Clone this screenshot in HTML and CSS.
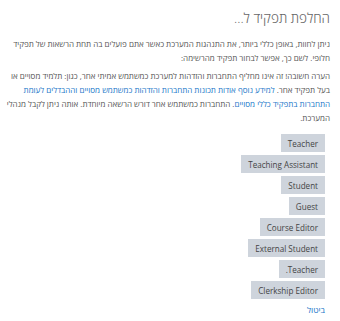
FILE: index.html
```html
<!DOCTYPE html>
<html lang="he" dir="rtl">
<head>
    <meta charset="UTF-8">
    <meta name="viewport" content="width=device-width, initial-scale=1.0">
    <title>החלפת תפקיד</title>
    <link rel="stylesheet" href="styles.css">
</head>
<body>

    <div class="switch-role">
        <h2 class="page-title">החלפת תפקיד ל...</h2>

        <p class="intro">ניתן לחוות, באופן כללי ביותר, את התנהגות המערכת כאשר אתם פועלים בה תחת הרשאות של תפקיד חלופי. לשם כך, אפשר לבחור תפקיד מהרשימה:</p>

        <p class="intro">הערה חשובה! זה אינו מחליף התחברות והזדהות למערכת כמשתמש אמיתי אחר, כגון: תלמיד מסויים או בעל תפקיד אחר. <a href="#">למידע נוסף אודות תכונות התחברות והזדהות כמשתמש מסויים וההבדלים לעומת התחברות בתפקיד כללי מסויים</a>. התחברות כמשתמש אחר דורש הרשאה מיוחדת. אותה ניתן לקבל מנהלי המערכת.</p>

        <div class="role-list">
            <button class="role-btn">Teacher</button>
            <button class="role-btn">Teaching Assistant</button>
            <button class="role-btn">Student</button>
            <button class="role-btn">Guest</button>
            <button class="role-btn">Course Editor</button>
            <button class="role-btn">External Student</button>
            <button class="role-btn">Teacher.</button>
            <button class="role-btn">Clerkship Editor</button>
        </div>

        <a class="cancel-link" href="#">ביטול</a>
    </div>

</body>
</html>
```

FILE: styles.css
```css
body {
    font-family: "Open Sans", Arial, sans-serif;
    margin: 0;
    padding: 0;
    background-color: #ffffff;
    color: #555;
}

.switch-role {
    padding: 7px 10px 0 6px;
}

/* Heading */
.page-title {
    font-size: 13.5px;
    font-weight: 300;
    color: #666;
    margin: 0 0 8px 0;
    line-height: 22px;
}

.intro {
    font-size: 8px;
    line-height: 14px;
    margin: 0 0 4px 0;
}

.intro a {
    color: #1a77c9;
    text-decoration: none;
}

/* Role buttons */
.role-list {
    display: flex;
    flex-direction: column;
    align-items: flex-start;
    gap: 3px;
    margin-top: 9px;
    padding-right: 5px;
}

.role-btn {
    font-family: "Open Sans", Arial, sans-serif;
    font-size: 8.1px;
    color: #444;
    background-color: #ced4dc;
    border: none;
    border-radius: 0;
    height: 18px;
    padding: 0 7px;
    cursor: pointer;
}

.cancel-link {
    display: block;
    font-size: 8.5px;
    color: #1a77c9;
    text-decoration: none;
    margin-top: 5px;
    padding-right: 5px;
}
```
